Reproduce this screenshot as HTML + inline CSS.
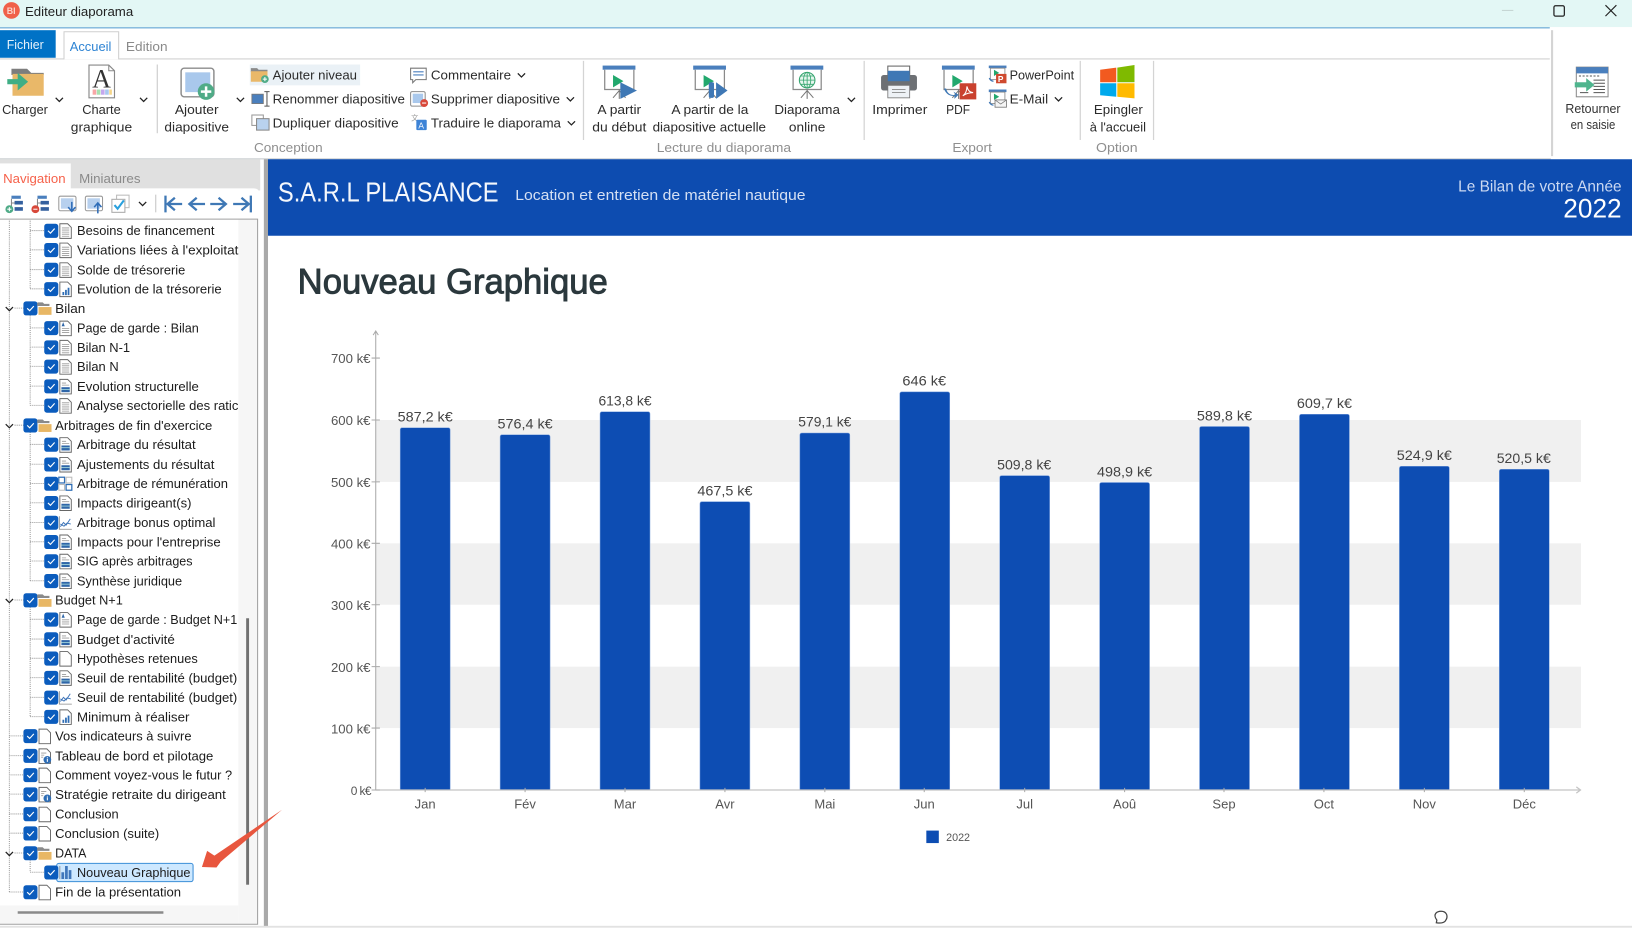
<!DOCTYPE html>
<html lang="fr"><head><meta charset="utf-8"><title>Editeur diaporama</title>
<style>
html,body{margin:0;padding:0;background:#fff;width:1632px;height:938px;overflow:hidden}
svg{display:block}
text{font-family:"Liberation Sans",sans-serif;white-space:pre}
.r{font-size:12.6px;fill:#2b2b2b}
.g{font-size:12.6px;fill:#8f8f8f}
.t{font-size:12.6px;fill:#1c1c1c}
.c{font-size:13px;fill:#444}
.y{font-size:12.5px;fill:#555}
.m{font-size:12.5px;fill:#555;text-anchor:middle}
</style></head><body>
<svg xmlns="http://www.w3.org/2000/svg" width="1632" height="938" viewBox="0 0 1568 901.2" preserveAspectRatio="none">
<defs>
<g id="chev"><path d="M-3.5 -2 L0 1.5 L3.5 -2" fill="none" stroke="#222" stroke-width="1.2"/></g>
<g id="cb"><rect x="0" y="-6.5" width="13.5" height="13.5" rx="2.5" fill="#0b5cbd"/><path d="M3.6 .2 l2.4 2.3 l4 -4.4" fill="none" stroke="#fff" stroke-width="1.1"/></g>
<g id="blank"><path d="M.5 -6.5 h7.5 l3.5 3.5 v10.500 h-11z" fill="#fff" stroke="#666" stroke-width=".9"/></g>
<g id="lines"><use href="#blank"/><path d="M2.5 -2.5h7M2.5 -.5h7M2.5 1.500h7M2.5 3.500h7M2.5 5.500h7" stroke="#999" stroke-width=".8"/></g>
<g id="chart"><use href="#blank"/><path d="M3 3h1.700v3h-1.700zM5.500 1h1.700v5h-1.700zM8 -1h1.700v7h-1.700z" fill="#2e6db5"/></g>
<g id="form"><use href="#blank"/><path d="M2.500 -3h4M2.500 -1h7" stroke="#999" stroke-width=".8"/><rect x="2" y="1" width="8" height="4.800" fill="#2f66a8"/><path d="M2 3.200h8" stroke="#cfe" stroke-width=".6"/></g>
<g id="title"><use href="#blank"/><path d="M2.200 -1.500l1.500 -4l1.500 4z" fill="#2f66a8"/><path d="M2.500 .5h7M2.500 2.500h7M2.500 4.500h7" stroke="#999" stroke-width=".8"/></g>
<g id="info"><use href="#blank"/><path d="M2.500 -2.500h5M2.500 -.5h3M2.500 1.500h2" stroke="#999" stroke-width=".8"/><circle cx="8.500" cy="4" r="3.700" fill="#2e6db5"/><path d="M8.500 3v3M8.500 1.600v.8" stroke="#fff" stroke-width="1"/></g>
<g id="lc"><path d="M.5 -6v12.500h12" fill="none" stroke="#888" stroke-width=".8"/><path d="M1.500 4l3 -4l2.500 2.500l4 -6M1.500 1.500l3.500 2l3 -3l3.500 1" fill="none" stroke="#3d74b8" stroke-width=".9"/></g>
<g id="grid"><rect x="0" y="-6" width="5.500" height="5.500" fill="#fff" stroke="#2e6db5" stroke-width="1.200"/><rect x="7" y="-6" width="5.500" height="5.500" fill="#fff" stroke="#bbb" stroke-width="1"/><rect x="0" y="1" width="5.500" height="5.500" fill="#fff" stroke="#bbb" stroke-width="1"/><rect x="7" y="1" width="5.500" height="5.500" fill="#fff" stroke="#2e6db5" stroke-width="1.200"/></g>
<g id="fold"><path d="M0 -5.500h5l1.500 1.500h5v2h-12z" fill="#8a8a8a"/><path d="M1 6.500v-7.500h12.500v7.500z" fill="#e8b765"/></g>
<g id="bars"><path d="M.5 -6v12.500" stroke="#888" stroke-width=".8"/><path d="M2 0h2.600v6.500h-2.600zM5.500 -6h2.600v12.500h-2.600zM9 -2h2.600v8.500h-2.600z" fill="#4077bb"/></g>
<g id="board"><rect x="0" y="0" width="31.500" height="4" fill="#4a7fbd"/><path d="M2 4v19h28v-19" fill="#fff" stroke="#8a8a8a" stroke-width="1.200"/><path d="M16 23v9M16 24l-6 7M16 24l6 7" stroke="#777" stroke-width="1" fill="none"/><path d="M10 9l10 6l-10 6z" fill="#22a86d"/></g>
</defs>

<!-- Title bar -->
<rect width="1568" height="26" fill="#e3f7f5"/>
<rect y="26" width="1489" height="1.400" fill="#83b9dc"/>
<circle cx="11" cy="10" r="8" fill="#f0614a"/>
<text x="6.500" y="13.500" style="font-size:8.500px;font-weight:bold;fill:#fbd2c9">BI</text>
<text x="24" y="15.500" textLength="104" lengthAdjust="spacingAndGlyphs" style="font-size:12.600px;fill:#222">Editeur diaporama</text>
<rect x="1443" y="9.500" width="11" height="1" fill="#c4d4d2"/>
<rect x="1493" y="5.500" width="10" height="10" rx="1.500" fill="none" stroke="#222" stroke-width="1.200"/>
<path d="M1542.500 5 l10.500 10.500 M1553 5 l-10.500 10.500" stroke="#222" stroke-width="1.100"/>

<!-- Ribbon tabs -->
<rect x="0" y="29" width="53.500" height="26.500" fill="#0072c6"/>
<text x="6.500" y="47" textLength="35.500" lengthAdjust="spacingAndGlyphs" style="font-size:12px;fill:#e6f2fb">Fichier</text>
<rect y="56" width="1489" height="1.200" fill="#d6d6d6"/>
<path d="M61.500 57 V30.500 H114 V57" fill="#fff" stroke="#cfcfcf"/>
<text x="67" y="49" textLength="40" lengthAdjust="spacingAndGlyphs" style="font-size:12.600px;fill:#2d83d3">Accueil</text>
<text x="121" y="49" textLength="40" lengthAdjust="spacingAndGlyphs" style="font-size:12.600px;fill:#8a8a8a">Edition</text>
<rect x="1490.200" y="29" width="2" height="121" fill="#d4d4d4"/>

<!-- Ribbon dividers -->
<g fill="#d4d4d4"><rect x="150.500" y="62" width="1.300" height="66"/><rect x="560" y="58.500" width="1.200" height="76"/><rect x="829.700" y="58.500" width="1.200" height="76"/><rect x="1037.300" y="58.500" width="1.200" height="76"/><rect x="1107.700" y="58.500" width="1.200" height="76"/></g>

<!-- Charger -->
<path d="M11 66h15l4 4h12v2h-31z" fill="#7d7d7d"/>
<path d="M12 71h30v21h-30z" fill="#e9b869"/>
<path d="M7 76h10v-6l10 8.500l-10 8.500v-6h-10z" fill="#3fae85"/>
<use href="#chev" x="57" y="96"/>
<text class="r" x="2" y="109.500" textLength="44" lengthAdjust="spacingAndGlyphs">Charger</text>
<!-- Charte -->
<path d="M85.500 62.500h19l5.500 5.500v26h-24.500z" fill="#fff" stroke="#888" stroke-width="1.100"/>
<path d="M104.500 62.500v5.500h5.500" fill="none" stroke="#888"/>
<text x="97.500" y="84" text-anchor="middle" style="font-family:'Liberation Serif',serif;font-size:25px;fill:#333">A</text>
<rect x="89" y="86" width="3.500" height="5" fill="#f7a6a6"/><rect x="93" y="86" width="3.500" height="5" fill="#a8e0b0"/><rect x="97" y="86" width="3.500" height="5" fill="#c5a8ee"/><rect x="101" y="86" width="3.500" height="5" fill="#a8c8f0"/><rect x="105" y="86" width="2.500" height="5" fill="#f5d58a"/>
<use href="#chev" x="138" y="96"/>
<text class="r" x="79" y="109.500" textLength="37" lengthAdjust="spacingAndGlyphs">Charte</text>
<text class="r" x="68" y="126.500" textLength="59" lengthAdjust="spacingAndGlyphs">graphique</text>
<!-- Ajouter diapo -->
<rect x="174" y="65.500" width="31.500" height="27.500" rx="3" fill="#fff" stroke="#8c8c8c" stroke-width="1.400"/>
<rect x="178" y="69.500" width="24" height="19" fill="#a9c8ec"/>
<circle cx="198" cy="88" r="8" fill="#4fab87"/><path d="M198 83v10M193 88h10" stroke="#fff" stroke-width="2.400"/>
<use href="#chev" x="231" y="96"/>
<text class="r" x="168" y="109.500" textLength="42" lengthAdjust="spacingAndGlyphs">Ajouter</text>
<text class="r" x="158" y="126.500" textLength="62" lengthAdjust="spacingAndGlyphs">diapositive</text>

<!-- Small conception buttons -->
<rect x="240" y="62" width="106" height="20" fill="#eaf1f6"/>
<path d="M241 65.500h6l1.500 1.500h8.500v2h-16z" fill="#8a8a8a"/><path d="M241 68.500h16v10h-16z" fill="#e9b869"/><circle cx="254.500" cy="76" r="3.700" fill="#4fab87"/><path d="M254.500 74v4M252.500 76h4" stroke="#fff"/>
<text class="r" x="262" y="76.500" textLength="81" lengthAdjust="spacingAndGlyphs">Ajouter niveau</text>
<rect x="242" y="90.500" width="11" height="9" fill="#4a7fbd" stroke="#777" stroke-width=".8"/><path d="M256.500 88v14M254 88h5M254 102h5" stroke="#555" stroke-width="1"/>
<text class="r" x="262" y="99.500" textLength="127" lengthAdjust="spacingAndGlyphs">Renommer diapositive</text>
<rect x="242" y="110.500" width="11" height="10" fill="#fff" stroke="#999"/><rect x="246.500" y="114" width="12" height="11" fill="#b9d2ee" stroke="#888"/>
<text class="r" x="262" y="122.500" textLength="121" lengthAdjust="spacingAndGlyphs">Dupliquer diapositive</text>
<path d="M394.500 65.500h15v11h-10l-3 3v-3h-2z" fill="#fff" stroke="#777"/><path d="M397 69h10M397 72h10" stroke="#4a7fbd"/>
<text class="r" x="414" y="76.500" textLength="77" lengthAdjust="spacingAndGlyphs">Commentaire</text>
<use href="#chev" x="501" y="72.500"/>
<rect x="394.500" y="88" width="14" height="14" rx="1.500" fill="#fff" stroke="#8c8c8c"/><rect x="396.500" y="90" width="10" height="9" fill="#a9c8ec"/><circle cx="407.500" cy="99" r="3.800" fill="#d8483a"/><path d="M405.500 99h4" stroke="#fff"/>
<text class="r" x="414" y="99.500" textLength="124" lengthAdjust="spacingAndGlyphs">Supprimer diapositive</text>
<use href="#chev" x="548" y="95.500"/>
<text x="395" y="116" style="font-family:'Liberation Sans','Noto Sans CJK SC',sans-serif;font-size:7px;fill:#999">文</text><rect x="400" y="115" width="10" height="10" rx="1" fill="#3d83d6"/><text x="402" y="123.500" style="font-size:8px;fill:#fff">A</text>
<text class="r" x="414" y="122.500" textLength="125" lengthAdjust="spacingAndGlyphs">Traduire le diaporama</text>
<use href="#chev" x="549" y="118.500"/>
<text class="g" x="244" y="146" textLength="66" lengthAdjust="spacingAndGlyphs">Conception</text>

<!-- Lecture -->
<use href="#board" x="579" y="63"/>
<path d="M596 79 l16 8 l-16 8z" fill="#3f78b5"/>
<text class="r" x="574" y="109.500" textLength="42" lengthAdjust="spacingAndGlyphs">A partir</text>
<text class="r" x="569" y="126.500" textLength="52" lengthAdjust="spacingAndGlyphs">du début</text>
<use href="#board" x="666" y="63"/>
<rect x="681" y="79" width="5" height="15" rx="1.500" fill="#3f78b5"/><path d="M688 79 l11 8 l-11 8z" fill="#3f78b5"/>
<text class="r" x="645" y="109.500" textLength="74" lengthAdjust="spacingAndGlyphs">A partir de la</text>
<text class="r" x="627" y="126.500" textLength="109" lengthAdjust="spacingAndGlyphs">diapositive actuelle</text>
<rect x="759.500" y="63" width="31.500" height="4" fill="#4a7fbd"/><path d="M762 67v19h27v-19" fill="#fff" stroke="#8a8a8a" stroke-width="1.200"/><path d="M775.500 86v9M775.500 87l-6 7M775.500 87l6 7" stroke="#777" fill="none"/>
<circle cx="775.500" cy="77" r="7.500" fill="#e6f6ee" stroke="#35a56f" stroke-width="1"/><path d="M768 77h15M775.500 69.500v15M769.500 73h12M769.500 81h12" stroke="#35a56f" stroke-width=".8"/><ellipse cx="775.500" cy="77" rx="3.500" ry="7.500" fill="none" stroke="#35a56f" stroke-width=".8"/>
<use href="#chev" x="818" y="96"/>
<text class="r" x="744" y="109.500" textLength="63" lengthAdjust="spacingAndGlyphs">Diaporama</text>
<text class="r" x="758" y="126.500" textLength="35" lengthAdjust="spacingAndGlyphs">online</text>
<text class="g" x="631" y="146" textLength="129" lengthAdjust="spacingAndGlyphs">Lecture du diaporama</text>

<!-- Export -->
<rect x="853" y="63.500" width="21" height="10" fill="#fff" stroke="#666"/>
<rect x="846.500" y="72" width="34.500" height="15" rx="2.500" fill="#6d7074"/><rect x="853" y="68" width="21" height="10" fill="#3f78b5"/>
<rect x="853" y="82" width="21" height="12" fill="#eef2f6" stroke="#777" stroke-width=".8"/><path d="M857 86h13M857 89h13" stroke="#777" stroke-width=".8"/>
<text class="r" x="838" y="109.500" textLength="53" lengthAdjust="spacingAndGlyphs">Imprimer</text>
<use href="#board" x="905" y="63"/>
<rect x="922" y="80" width="16" height="15.500" fill="#c9412e"/><path d="M925 92c3 -2 4 -6 4 -9c1 4 3 6 6 6c-3 0 -7 1 -10 3z" fill="none" stroke="#fff" stroke-width="1"/>
<path d="M909 85 c1 5 5 7 9 6 l-2 -3 l5 3 l-4 4 l0 -3 c-5 1 -9 -3 -10 -7z" fill="#3f78b5"/>
<text class="r" x="909" y="109.500" textLength="23" lengthAdjust="spacingAndGlyphs">PDF</text>
<rect x="950" y="63" width="17" height="2.500" fill="#4a7fbd"/><rect x="951.500" y="65.500" width="14" height="11" fill="#fff" stroke="#888" stroke-width=".8"/><path d="M955 67l5 3l-5 3z" fill="#22a86d"/>
<rect x="957" y="71" width="10" height="9" fill="#cf4a2f"/><text x="958.800" y="79" style="font-size:8px;font-weight:bold;fill:#fff">P</text>
<path d="M950.500 75c1 2 2 3 4 3" stroke="#3f78b5" stroke-width="1.300" fill="none"/>
<text class="r" x="970" y="76.500" textLength="62" lengthAdjust="spacingAndGlyphs">PowerPoint</text>
<rect x="950" y="86" width="17" height="2.500" fill="#4a7fbd"/><rect x="951.500" y="88.500" width="14" height="11" fill="#fff" stroke="#888" stroke-width=".8"/><path d="M955 90l5 3l-5 3z" fill="#22a86d"/>
<rect x="956" y="96" width="11" height="7" fill="#f5f5f5" stroke="#777" stroke-width=".8"/><path d="M956 96l5.500 4l5.500 -4" fill="none" stroke="#777" stroke-width=".7"/>
<path d="M950.500 98c1 2 2 3 4 3" stroke="#3f78b5" stroke-width="1.300" fill="none"/>
<text class="r" x="970" y="99.500" textLength="37" lengthAdjust="spacingAndGlyphs">E-Mail</text>
<use href="#chev" x="1017" y="95.500"/>
<text class="g" x="915" y="146" textLength="38" lengthAdjust="spacingAndGlyphs">Export</text>

<!-- Option -->
<path d="M1057 67l15.500 -2v14h-15.500z" fill="#f25a1f"/><path d="M1073.500 65l16.500 -2.500v16.500h-16.500z" fill="#7fba00"/><path d="M1057 80h15.500v13l-15.500 -1.500z" fill="#00a9ec"/><path d="M1073.500 80h16.500v14.500l-16.500 -1.500z" fill="#ffba00"/>
<text class="r" x="1051" y="109.500" textLength="47" lengthAdjust="spacingAndGlyphs">Epingler</text>
<text class="r" x="1047" y="126.500" textLength="54" lengthAdjust="spacingAndGlyphs">à l'accueil</text>
<text class="g" x="1053" y="146" textLength="40" lengthAdjust="spacingAndGlyphs">Option</text>

<!-- Retourner -->
<rect x="1514.500" y="64.500" width="30.500" height="28.500" fill="#fff" stroke="#8b8b8b"/><rect x="1514.500" y="64.500" width="30.500" height="6" fill="#4a7fbd"/>
<path d="M1517 73h20" stroke="#555" stroke-dasharray="2 1.500"/><path d="M1531 77h11M1531 80h11M1531 83h11M1531 86h11M1531 89h11M1518 89h8" stroke="#555" stroke-width=".9"/>
<path d="M1513 79h11v-4l8 6.500l-8 6.500v-4h-11z" fill="#4fb58e"/>
<text x="1504" y="108.500" textLength="53" lengthAdjust="spacingAndGlyphs" style="font-size:12px;fill:#333">Retourner</text>
<text x="1509" y="124" textLength="43" lengthAdjust="spacingAndGlyphs" style="font-size:12px;fill:#333">en saisie</text>

<rect y="152" width="1490" height="1.200" fill="#cfd3d6"/>

<!-- Left panel -->
<rect x="0" y="153" width="250" height="30" fill="#e0e0e0"/>
<rect x="0" y="157" width="68" height="26" fill="#fff"/>
<path d="M0 181h244q5 0 5 5v24h-249z" fill="#fff"/>
<text x="3" y="176" textLength="60" lengthAdjust="spacingAndGlyphs" style="font-size:12.600px;fill:#f6614a">Navigation</text>
<text x="76" y="176" textLength="59" lengthAdjust="spacingAndGlyphs" style="font-size:12.600px;fill:#8a8a8a">Miniatures</text>
<rect x="253.500" y="153" width="4" height="737" fill="#a9a9a9"/>

<!-- Toolbar -->
<g>
<rect x="11" y="188" width="9" height="3" fill="#4a7fbd"/><path d="M11 191v8M11 195h4" stroke="#888" fill="none"/><rect x="14" y="193" width="8" height="3.500" fill="#34609e"/><rect x="14" y="199" width="8" height="3.500" fill="#34609e"/><circle cx="9" cy="201" r="3.800" fill="#4fab87"/><path d="M7 201h4M9 199v4" stroke="#fff"/>
<rect x="36" y="188" width="9" height="3" fill="#4a7fbd"/><path d="M36 191v8M36 195h4" stroke="#888" fill="none"/><rect x="39" y="193" width="8" height="3.500" fill="#34609e"/><rect x="39" y="199" width="8" height="3.500" fill="#34609e"/><circle cx="34" cy="201" r="3.800" fill="#d8483a"/><path d="M32 201h4" stroke="#fff"/>
<rect x="56.500" y="188.500" width="16.500" height="14" rx="1.500" fill="#fff" stroke="#999"/><rect x="58.500" y="190.500" width="12" height="10" fill="#b7d0ee"/><path d="M69 194v8M65.500 199l3.500 4l3.500 -4" fill="none" stroke="#2f6db8" stroke-width="1.500"/>
<rect x="82" y="188.500" width="16.500" height="14" rx="1.500" fill="#fff" stroke="#999"/><rect x="84" y="190.500" width="12" height="10" fill="#b7d0ee"/><path d="M94 205v-9M90.500 199l3.500 -4l3.500 4" fill="none" stroke="#2f6db8" stroke-width="1.500"/>
<rect x="112" y="187.500" width="12" height="12" fill="#fff" stroke="#bbb"/><rect x="107.500" y="191.500" width="12.500" height="12.500" fill="#fff" stroke="#aaa"/><path d="M110 197l3 3.500l6 -8" fill="none" stroke="#2aa0dd" stroke-width="2"/>
<use href="#chev" x="137" y="196"/>
<rect x="149" y="187" width="1.200" height="17" fill="#cfcfcf"/>
<g fill="none" stroke="#3f78b5" stroke-width="2.200"><path d="M159 188v16M175 196h-14M168 190l-7 6l7 6"/><path d="M197 196h-15M189 190l-7 6l7 6"/><path d="M202 196h15M210 190l7 6l-7 6"/><path d="M224 196h15M232 190l7 6l-7 6M241 188v16"/></g>
</g>

<!-- Tree area -->
<rect x="229" y="211" width="18.500" height="676.500" fill="#f6f6f6"/>
<rect x="0" y="870" width="229" height="17.500" fill="#f6f6f6"/>
<path d="M0 210.500H247.500V888H0" fill="none" stroke="#a0a0a0" stroke-width="1"/>
<rect x="236.500" y="594" width="2.800" height="256" fill="#707070"/>
<rect x="17" y="875.500" width="140" height="2.400" fill="#8a8a8a"/>

<!-- Tree connectors -->
<g fill="none" stroke="#9a9a9a" stroke-width="1" stroke-dasharray="1 1">
<path d="M9 212V857M9 857H23M9 707H23M9 726H23M9 744.500H23M9 763H23M9 782H23M9 800.500H23M14 296H23M14 408.500H23M14 576.500H23M14 819.500H23"/>
<path d="M29 212V277.500M29 221.500H43M29 240H43M29 259H43M29 277.500H43"/>
<path d="M29 303V389.500M29 315H43M29 333.500H43M29 352H43M29 371H43M29 389.500H43"/>
<path d="M29 415V558M29 427H43M29 446H43M29 464.500H43M29 483H43M29 502H43M29 520.500H43M29 539H43M29 558H43"/>
<path d="M29 583V688.500M29 595H43M29 614H43M29 632.500H43M29 651H43M29 670H43M29 688.500H43"/>
<path d="M29 826V838M29 838H43"/>
</g>
<use href="#chev" x="9" y="297"/><use href="#chev" x="9" y="409.500"/><use href="#chev" x="9" y="577.500"/><use href="#chev" x="9" y="820.500"/>

<!-- Selection -->
<rect x="54.500" y="829.500" width="131" height="17.500" rx="2" fill="#cde8ff" stroke="#3d8fd8"/>

<!-- Tree rows -->
<g id="tree">
<use href="#cb" x="42.500" y="221.500"/><use href="#lines" x="57" y="221.500"/><text class="t" x="74" y="226" textLength="132" lengthAdjust="spacingAndGlyphs">Besoins de financement</text>
<use href="#cb" x="42.500" y="240"/><use href="#lines" x="57" y="240"/><text class="t" x="74" y="244.500" textLength="155" lengthAdjust="spacingAndGlyphs">Variations liées à l'exploitat</text>
<use href="#cb" x="42.500" y="259"/><use href="#lines" x="57" y="259"/><text class="t" x="74" y="263.500" textLength="104" lengthAdjust="spacingAndGlyphs">Solde de trésorerie</text>
<use href="#cb" x="42.500" y="277.500"/><use href="#chart" x="57" y="277.500"/><text class="t" x="74" y="282" textLength="139" lengthAdjust="spacingAndGlyphs">Evolution de la trésorerie</text>
<use href="#cb" x="22.500" y="296"/><use href="#fold" x="36" y="296"/><text class="t" x="53" y="300.500" textLength="29" lengthAdjust="spacingAndGlyphs">Bilan</text>
<use href="#cb" x="42.500" y="315"/><use href="#title" x="57" y="315"/><text class="t" x="74" y="319.500" textLength="117" lengthAdjust="spacingAndGlyphs">Page de garde : Bilan</text>
<use href="#cb" x="42.500" y="333.500"/><use href="#lines" x="57" y="333.500"/><text class="t" x="74" y="338" textLength="51" lengthAdjust="spacingAndGlyphs">Bilan N-1</text>
<use href="#cb" x="42.500" y="352"/><use href="#lines" x="57" y="352"/><text class="t" x="74" y="356.500" textLength="40" lengthAdjust="spacingAndGlyphs">Bilan N</text>
<use href="#cb" x="42.500" y="371"/><use href="#form" x="57" y="371"/><text class="t" x="74" y="375.500" textLength="117" lengthAdjust="spacingAndGlyphs">Evolution structurelle</text>
<use href="#cb" x="42.500" y="389.500"/><use href="#lines" x="57" y="389.500"/><text class="t" x="74" y="394" textLength="155" lengthAdjust="spacingAndGlyphs">Analyse sectorielle des ratic</text>
<use href="#cb" x="22.500" y="408.500"/><use href="#fold" x="36" y="408.500"/><text class="t" x="53" y="413" textLength="151" lengthAdjust="spacingAndGlyphs">Arbitrages de fin d'exercice</text>
<use href="#cb" x="42.500" y="427"/><use href="#form" x="57" y="427"/><text class="t" x="74" y="431.500" textLength="114" lengthAdjust="spacingAndGlyphs">Arbitrage du résultat</text>
<use href="#cb" x="42.500" y="446"/><use href="#form" x="57" y="446"/><text class="t" x="74" y="450.500" textLength="132" lengthAdjust="spacingAndGlyphs">Ajustements du résultat</text>
<use href="#cb" x="42.500" y="464.500"/><use href="#grid" x="56.500" y="464.500"/><text class="t" x="74" y="469" textLength="145" lengthAdjust="spacingAndGlyphs">Arbitrage de rémunération</text>
<use href="#cb" x="42.500" y="483"/><use href="#form" x="57" y="483"/><text class="t" x="74" y="487.500" textLength="110" lengthAdjust="spacingAndGlyphs">Impacts dirigeant(s)</text>
<use href="#cb" x="42.500" y="502"/><use href="#lc" x="56.500" y="502"/><text class="t" x="74" y="506.500" textLength="133" lengthAdjust="spacingAndGlyphs">Arbitrage bonus optimal</text>
<use href="#cb" x="42.500" y="520.500"/><use href="#form" x="57" y="520.500"/><text class="t" x="74" y="525" textLength="138" lengthAdjust="spacingAndGlyphs">Impacts pour l'entreprise</text>
<use href="#cb" x="42.500" y="539"/><use href="#form" x="57" y="539"/><text class="t" x="74" y="543.500" textLength="111" lengthAdjust="spacingAndGlyphs">SIG après arbitrages</text>
<use href="#cb" x="42.500" y="558"/><use href="#form" x="57" y="558"/><text class="t" x="74" y="562.500" textLength="101" lengthAdjust="spacingAndGlyphs">Synthèse juridique</text>
<use href="#cb" x="22.500" y="576.500"/><use href="#fold" x="36" y="576.500"/><text class="t" x="53" y="581" textLength="65" lengthAdjust="spacingAndGlyphs">Budget N+1</text>
<use href="#cb" x="42.500" y="595"/><use href="#title" x="57" y="595"/><text class="t" x="74" y="599.500" textLength="154" lengthAdjust="spacingAndGlyphs">Page de garde : Budget N+1</text>
<use href="#cb" x="42.500" y="614"/><use href="#form" x="57" y="614"/><text class="t" x="74" y="618.500" textLength="94" lengthAdjust="spacingAndGlyphs">Budget d'activité</text>
<use href="#cb" x="42.500" y="632.500"/><use href="#blank" x="57" y="632.500"/><text class="t" x="74" y="637" textLength="116" lengthAdjust="spacingAndGlyphs">Hypothèses retenues</text>
<use href="#cb" x="42.500" y="651"/><use href="#form" x="57" y="651"/><text class="t" x="74" y="655.500" textLength="154" lengthAdjust="spacingAndGlyphs">Seuil de rentabilité (budget)</text>
<use href="#cb" x="42.500" y="670"/><use href="#lc" x="56.500" y="670"/><text class="t" x="74" y="674.500" textLength="154" lengthAdjust="spacingAndGlyphs">Seuil de rentabilité (budget)</text>
<use href="#cb" x="42.500" y="688.500"/><use href="#chart" x="57" y="688.500"/><text class="t" x="74" y="693" textLength="108" lengthAdjust="spacingAndGlyphs">Minimum à réaliser</text>
<use href="#cb" x="22.500" y="707"/><use href="#blank" x="37" y="707"/><text class="t" x="53" y="711.500" textLength="131" lengthAdjust="spacingAndGlyphs">Vos indicateurs à suivre</text>
<use href="#cb" x="22.500" y="726"/><use href="#info" x="37" y="726"/><text class="t" x="53" y="730.500" textLength="152" lengthAdjust="spacingAndGlyphs">Tableau de bord et pilotage</text>
<use href="#cb" x="22.500" y="744.500"/><use href="#blank" x="37" y="744.500"/><text class="t" x="53" y="749" textLength="170" lengthAdjust="spacingAndGlyphs">Comment voyez-vous le futur ?</text>
<use href="#cb" x="22.500" y="763"/><use href="#info" x="37" y="763"/><text class="t" x="53" y="767.500" textLength="164" lengthAdjust="spacingAndGlyphs">Stratégie retraite du dirigeant</text>
<use href="#cb" x="22.500" y="782"/><use href="#blank" x="37" y="782"/><text class="t" x="53" y="786.500" textLength="61" lengthAdjust="spacingAndGlyphs">Conclusion</text>
<use href="#cb" x="22.500" y="800.500"/><use href="#blank" x="37" y="800.500"/><text class="t" x="53" y="805" textLength="100" lengthAdjust="spacingAndGlyphs">Conclusion (suite)</text>
<use href="#cb" x="22.500" y="819.500"/><use href="#fold" x="36" y="819.500"/><text class="t" x="53" y="824" textLength="30" lengthAdjust="spacingAndGlyphs">DATA</text>
<use href="#cb" x="42.500" y="838"/><use href="#bars" x="57" y="838"/><text class="t" x="74" y="842.500" textLength="109" lengthAdjust="spacingAndGlyphs">Nouveau Graphique</text>
<use href="#cb" x="22.500" y="857"/><use href="#blank" x="37" y="857"/><text class="t" x="53" y="861.500" textLength="121" lengthAdjust="spacingAndGlyphs">Fin de la présentation</text>
</g>

<!-- Red arrow -->
<path d="M194 833 L199 817.500 L206 822 L271 778 L212 828 L208 833.500z" fill="#e8563e"/>

<!-- Banner -->
<rect x="257.500" y="153" width="1310.500" height="73.500" fill="#0d4cb0"/>
<text x="267" y="193.800" textLength="212" lengthAdjust="spacingAndGlyphs" style="font-size:27px;fill:#f4f7fc">S.A.R.L PLAISANCE</text>
<text x="495" y="192" textLength="279" lengthAdjust="spacingAndGlyphs" style="font-size:14.500px;fill:#d5e0f3">Location et entretien de matériel nautique</text>
<text x="1401" y="184" textLength="157" lengthAdjust="spacingAndGlyphs" style="font-size:15px;fill:#cbd9f2">Le Bilan de votre Année</text>
<text x="1502" y="208.800" textLength="56" lengthAdjust="spacingAndGlyphs" style="font-size:26px;fill:#fff">2022</text>

<!-- Title -->
<text x="286" y="282" textLength="298" lengthAdjust="spacingAndGlyphs" style="font-size:34px;fill:#2b383d;stroke:#2b383d;stroke-width:.9px">Nouveau Graphique</text>

<!-- Chart bands -->
<g fill="#f0f0f0"><rect x="361" y="403.500" width="1158" height="59.500"/><rect x="361" y="522" width="1158" height="59"/><rect x="361" y="640.500" width="1158" height="59"/></g>
<!-- Bars -->
<g fill="#0d4db3" stroke="#7ea3de" stroke-width=".5">
<path d="M384.500 759V413q0-2 2-2h44q2 0 2 2V759z"/>
<path d="M480.500 759V419.700q0-2 2-2h44q2 0 2 2V759z"/>
<path d="M576.500 759V397.600q0-2 2-2h44q2 0 2 2V759z"/>
<path d="M672.500 759V484q0-2 2-2h44q2 0 2 2V759z"/>
<path d="M768.500 759V418q0-2 2-2h44q2 0 2 2V759z"/>
<path d="M864.500 759V378.500q0-2 2-2h44q2 0 2 2V759z"/>
<path d="M960.500 759V459q0-2 2-2h44q2 0 2 2V759z"/>
<path d="M1056.500 759V465.600q0-2 2-2h44q2 0 2 2V759z"/>
<path d="M1152.500 759V411.800q0-2 2-2h44q2 0 2 2V759z"/>
<path d="M1248.500 759V400q0-2 2-2h44q2 0 2 2V759z"/>
<path d="M1344.500 759V450q0-2 2-2h44q2 0 2 2V759z"/>
<path d="M1440.500 759V452.800q0-2 2-2h44q2 0 2 2V759z"/>
</g>
<!-- Axes -->
<path d="M361 759V318M358.500 322L361 318L363.500 322" fill="none" stroke="#aaa" stroke-width="1"/>
<path d="M361 759H1518M1514.500 756L1518.500 759L1514.500 762" fill="none" stroke="#c4c4c4" stroke-width="1.200"/>
<path d="M357 344h8M357 403.500h8M357 463h8M357 522h8M357 581h8M357 640.500h8M357 699.500h8M357 759h8" stroke="#aaa"/>
<path d="M408.500 757v4M504.500 757v4M600.500 757v4M696.500 757v4M792.500 757v4M888 757v4M984.500 757v4M1080.500 757v4M1176 757v4M1272 757v4M1368.500 757v4M1464.500 757v4" stroke="#aaa"/>
<!-- Y labels -->
<text class="y" x="318" y="349" textLength="38" lengthAdjust="spacingAndGlyphs">700 k€</text>
<text class="y" x="318" y="408.500" textLength="38" lengthAdjust="spacingAndGlyphs">600 k€</text>
<text class="y" x="318" y="468" textLength="38" lengthAdjust="spacingAndGlyphs">500 k€</text>
<text class="y" x="318" y="527" textLength="38" lengthAdjust="spacingAndGlyphs">400 k€</text>
<text class="y" x="318" y="586" textLength="38" lengthAdjust="spacingAndGlyphs">300 k€</text>
<text class="y" x="318" y="645.500" textLength="38" lengthAdjust="spacingAndGlyphs">200 k€</text>
<text class="y" x="318" y="704.500" textLength="38" lengthAdjust="spacingAndGlyphs">100 k€</text>
<text class="y" x="337" y="764" textLength="20" lengthAdjust="spacing" style="font-size:11.500px">0 k€</text>
<!-- Value labels -->
<text class="c" x="382" y="405" textLength="53" lengthAdjust="spacingAndGlyphs">587,2 k€</text>
<text class="c" x="478" y="411.700" textLength="53" lengthAdjust="spacingAndGlyphs">576,4 k€</text>
<text class="c" x="575" y="389.600" textLength="51" lengthAdjust="spacingAndGlyphs">613,8 k€</text>
<text class="c" x="670" y="476" textLength="53" lengthAdjust="spacingAndGlyphs">467,5 k€</text>
<text class="c" x="767" y="410" textLength="51" lengthAdjust="spacingAndGlyphs">579,1 k€</text>
<text class="c" x="867" y="370.500" textLength="42" lengthAdjust="spacingAndGlyphs">646 k€</text>
<text class="c" x="958" y="451" textLength="52" lengthAdjust="spacingAndGlyphs">509,8 k€</text>
<text class="c" x="1054" y="457.600" textLength="53" lengthAdjust="spacingAndGlyphs">498,9 k€</text>
<text class="c" x="1150" y="403.800" textLength="53" lengthAdjust="spacingAndGlyphs">589,8 k€</text>
<text class="c" x="1246" y="392" textLength="53" lengthAdjust="spacingAndGlyphs">609,7 k€</text>
<text class="c" x="1342" y="442" textLength="53" lengthAdjust="spacingAndGlyphs">524,9 k€</text>
<text class="c" x="1438" y="444.800" textLength="52" lengthAdjust="spacingAndGlyphs">520,5 k€</text>
<!-- Months -->
<text class="m" x="408.500" y="777">Jan</text><text class="m" x="504.500" y="777">Fév</text><text class="m" x="600.500" y="777">Mar</text><text class="m" x="696.500" y="777">Avr</text><text class="m" x="792.500" y="777">Mai</text><text class="m" x="888" y="777">Jun</text><text class="m" x="984.500" y="777">Jul</text><text class="m" x="1080.500" y="777">Aoû</text><text class="m" x="1176" y="777">Sep</text><text class="m" x="1272" y="777">Oct</text><text class="m" x="1368.500" y="777">Nov</text><text class="m" x="1464.500" y="777">Déc</text>
<!-- Legend -->
<rect x="890" y="798" width="12" height="12" fill="#0d4db3"/>
<text x="909" y="808" textLength="23" lengthAdjust="spacingAndGlyphs" style="font-size:10.500px;fill:#555">2022</text>
<!-- Bubble -->
<path d="M1380 886.500 L1380.500 884 C1376 878 1381 875.500 1384.500 875.500 C1390 875.500 1392 880.500 1388.500 885 C1386.500 887 1383 887 1380 886.500z" fill="none" stroke="#444" stroke-width="1.200"/>
<!-- Bottom line -->
<rect x="0" y="889.500" width="1568" height="1.800" fill="#e2e2e2"/>
</svg>
</body></html>
